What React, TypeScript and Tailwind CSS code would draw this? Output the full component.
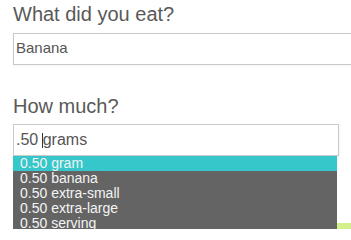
const options = ["gram", "banana", "extra-small", "extra-large", "serving"];

export default function App() {
  return (
    <div className="h-[229px] w-[351px] overflow-hidden bg-white font-['Liberation_Sans',Arial,sans-serif]">
      <div className="pl-[13px] pt-[4px]">
        <h2 className="text-[20px] leading-[20px] text-[#595959]">What did you eat?</h2>
        <div className="mt-[9px] h-[32px] w-[360px] border border-[#c9c9c9] bg-white pl-[2px] pt-[6px] shadow-[0_1px_2px_rgba(0,0,0,0.05)]">
          <span className="block text-[15px] leading-[15px] text-[#555555]">Banana</span>
        </div>

        <h2 className="mt-[31px] text-[20px] leading-[20px] text-[#595959]">How much?</h2>
        <div className="relative mt-[8px]">
          <div className="flex h-[32px] w-[326px] items-center border border-[#c9c9c9] bg-white pl-[2px] shadow-[1px_1px_2px_rgba(0,0,0,0.05)]">
            <span className="whitespace-pre text-[16px] text-[#555555]">.50 </span>
            <span className="-ml-[1px] h-[15px] w-px bg-[#333333]" />
            <span className="text-[16px] text-[#555555]">grams</span>
          </div>
          <ul className="absolute left-0 top-[32px] z-10 w-[324px] bg-[#646464] text-[14px] leading-[15px] text-[#f4f4f4]">
            {options.map((o, i) => (
              <li key={o} className={i === 0 ? "bg-[#35c7ca] pl-[7px]" : "pl-[7px]"}>
                0.50 {o}
              </li>
            ))}
          </ul>
          <div className="mt-[67px] h-[30px] w-[360px] bg-[#d3f08a]" />
        </div>
      </div>
    </div>
  );
}
